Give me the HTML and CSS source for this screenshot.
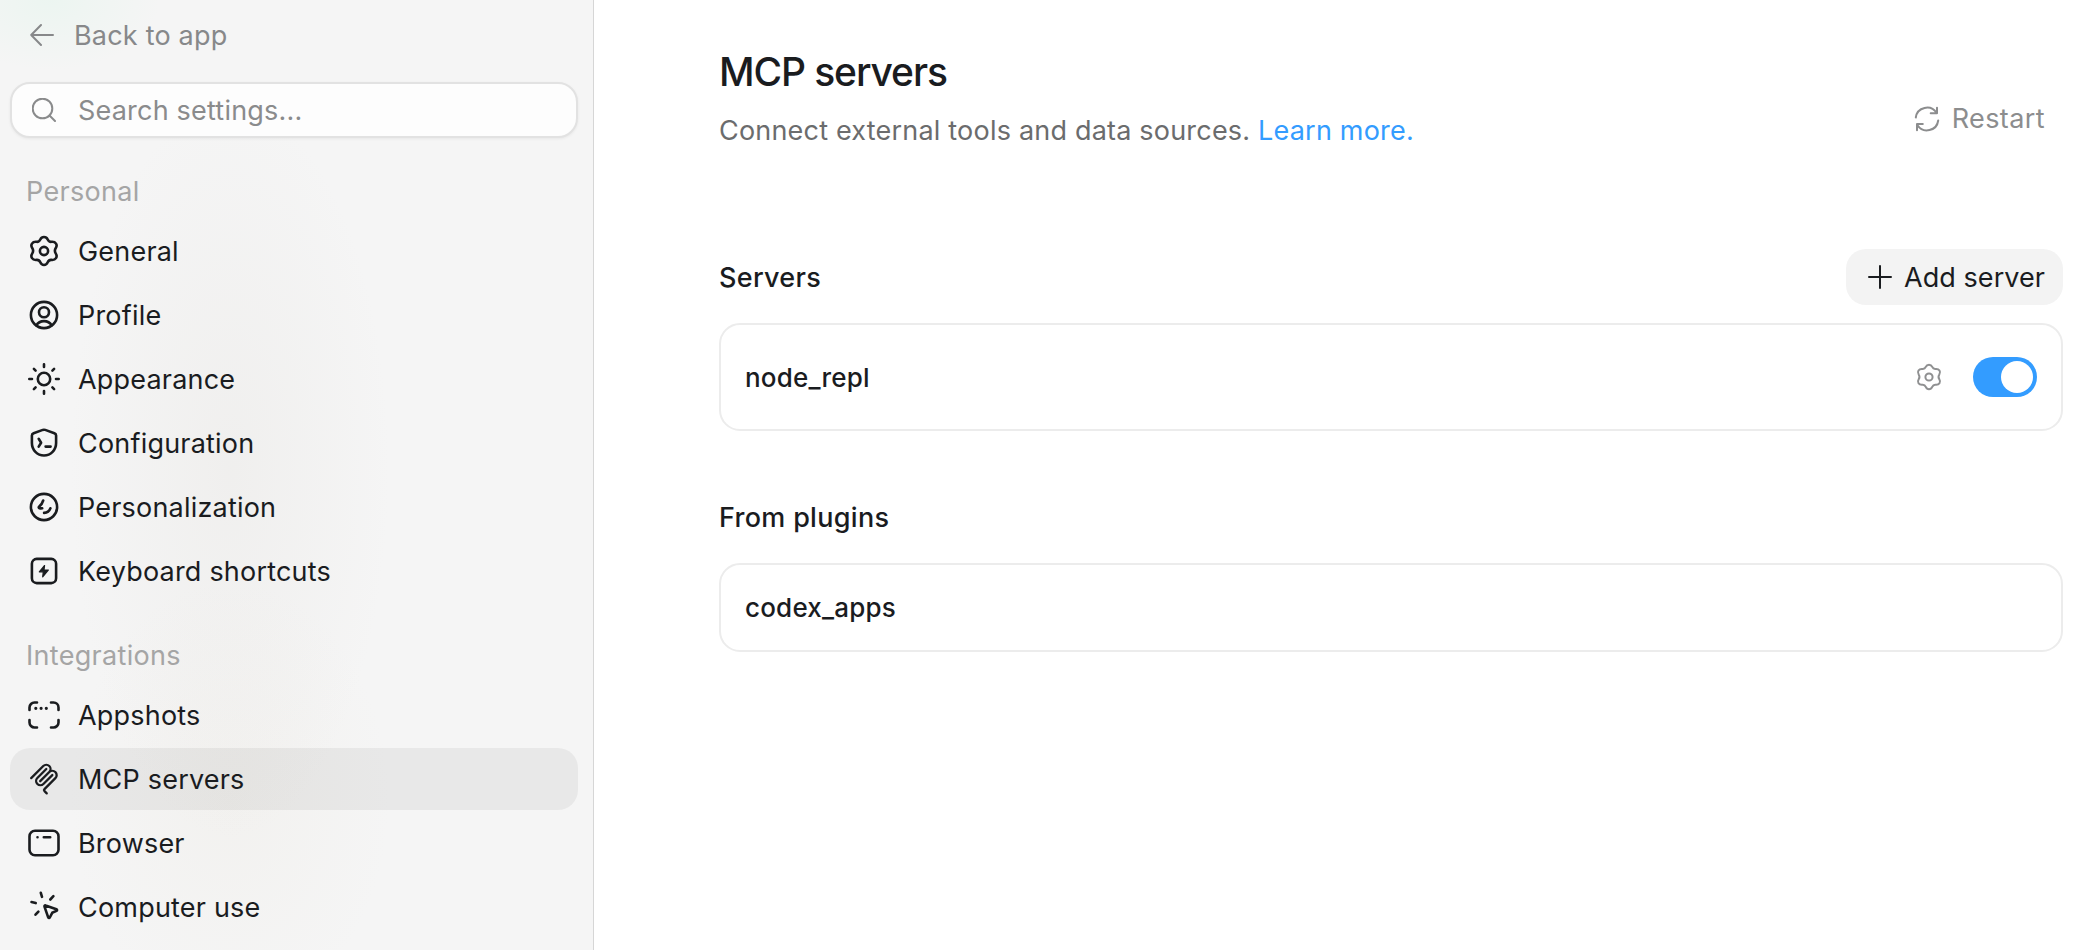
FILE: index.html
```html
<!DOCTYPE html>
<html lang="en">
<head>
    <meta charset="UTF-8">
    <meta name="viewport" content="width=device-width, initial-scale=1.0">
    <title>MCP servers</title>
    <link rel="stylesheet" href="styles.css">
</head>
<body>
    <aside class="sidebar">
        <a class="back">
            <svg class="back-icon" width="24" height="24" viewBox="0 0 24 24"><path d="M11 2 1.2 12 11 22M1.200 12H23"/></svg>
            <span>Back to app</span>
        </a>
        <label class="search">
            <svg width="24" height="24" viewBox="0 0 24 24"><circle cx="10.5" cy="10.5" r="9.8"/><path d="m17.500 17.500 5.500 5.500"/></svg>
            <span>Search settings...</span>
        </label>

        <h2 class="group-title">Personal</h2>
        <nav class="group">
            <a class="item">
                <svg class="icon" viewBox="0 0 32 32"><use href="#gear"/></svg>
                <span>General</span>
            </a>
            <a class="item">
                <svg class="icon" viewBox="0 0 32 32"><circle cx="16" cy="16" r="13.1"/><circle cx="16" cy="13.2" r="5"/><path d="M8.3 26.3c1.6-2.700 4.500-4.200 7.700-4.200s6.100 1.500 7.700 4.200"/></svg>
                <span>Profile</span>
            </a>
            <a class="item">
                <svg class="icon" viewBox="0 0 32 32"><circle cx="16" cy="16" r="6.200"/><path d="M16 1.300v2.700M16 28v2.700M1.300 16H4M28 16h2.700M5.900 5.900l1.700 1.700M24.400 24.400l1.700 1.700M5.900 26.100l1.700-1.700M24.400 7.600l1.700-1.700"/></svg>
                <span>Appearance</span>
            </a>
            <a class="item">
                <svg class="icon" viewBox="0 0 32 32"><path d="M14.800 2.900 5.600 6.200a2.600 2.600 0 0 0-1.700 2.400v7.400c0 7 5.300 12.500 12.100 12.500S28.100 23 28.100 16V8.600a2.600 2.600 0 0 0-1.700-2.400l-9.200-3.300a3.600 3.600 0 0 0-2.400 0z"/><path d="M10.700 11.800l2.400 3.900-2.400 3.900M17.600 19.600h5"/></svg>
                <span>Configuration</span>
            </a>
            <a class="item">
                <svg class="icon" viewBox="0 0 32 32"><circle cx="16" cy="16" r="13.100"/><path d="M15.200 9.500c-.8 2.600-2.100 4.700-4.200 6.300-.5.400-.2 1.300.4 1.400.9.200 1.900.2 2.800.1M22.400 17.300c-1 2.700-3.400 4.400-6.300 4.600"/></svg>
                <span>Personalization</span>
            </a>
            <a class="item">
                <svg class="icon" viewBox="0 0 32 32"><rect x="3.900" y="3.900" width="24.200" height="24.200" rx="4.800"/><path class="solid" d="m16.600 10.500-5.300 6.300h4l-.6 5 5.600-6.800h-4.300z"/></svg>
                <span>Keyboard shortcuts</span>
            </a>
        </nav>

        <h2 class="group-title">Integrations</h2>
        <nav class="group">
            <a class="item">
                <svg class="icon" viewBox="0 0 32 32"><path d="M1.500 11V8.500a5 5 0 0 1 5-5H9M23 3.500h2.500a5 5 0 0 1 5 5V11M30.500 21v2.500a5 5 0 0 1-5 5H23M9 28.500H6.500a5 5 0 0 1-5-5V21"/><path class="dots" d="M7.800 9.300h.01M13.100 9.300h.01M18.300 9.300h.01"/></svg>
                <span>Appshots</span>
            </a>
            <a class="item active">
                <svg class="icon mcp" viewBox="0 0 180 180"><path d="M18 84.850 85.880 16.970a24 24 0 0 1 33.940 33.940L68.560 102.180M69.270 101.470l50.550-50.560a24 24 0 0 1 33.940 0l.36.350a24 24 0 0 1 0 33.950l-61.400 61.390a8 8 0 0 0 0 11.310l12.610 12.610M102.850 33.940 52.650 84.150a24 24 0 0 0 33.940 33.940l50.200-50.210"/></svg>
                <span>MCP servers</span>
            </a>
            <a class="item">
                <svg class="icon" viewBox="0 0 32 32"><rect x="1.500" y="3.700" width="29" height="24.600" rx="5.500"/><path d="M9.500 10.200h.01M15.800 10.200h6.400"/></svg>
                <span>Browser</span>
            </a>
            <a class="item">
                <svg class="icon" viewBox="0 0 32 32"><path d="M16.500 15.600c-.3-.9.300-1.400 1.100-1.100l10.800 3.700c.9.300.9 1.300.1 1.700l-4.300 1.900-2.400 4.700c-.4.800-1.400.7-1.600-.2z"/><path d="m12.800 1.800 1.200 4M25.400 5.200l-3.100 3.300M3.500 11l4.200 1.100M10.400 20.600l-2.900 3.100"/></svg>
                <span>Computer use</span>
            </a>
        </nav>
    </aside>

    <main class="content">
        <header class="page-head">
            <div class="intro">
                <h1>MCP servers</h1>
                <p>Connect external tools and data sources. <a class="link">Learn more.</a></p>
            </div>
            <button class="restart">
                <svg width="26" height="26" viewBox="0 0 26 26"><path d="M1.800 11.500A11.300 11.300 0 0 1 22.500 6.800M23 1.800v5.500h-6.300M24.200 14.500A11.300 11.300 0 0 1 3.500 19.200M3 24.200v-6.300h5.800"/></svg>
                <span>Restart</span>
            </button>
        </header>

        <section class="servers">
            <div class="section-head">
                <h3>Servers</h3>
                <button class="add">
                    <svg width="24" height="24" viewBox="0 0 24 24"><path d="M12 1v22M1 12h22"/></svg>
                    <span>Add server</span>
                </button>
            </div>
            <div class="card card-server">
                <span class="name">node_repl</span>
                <svg class="card-gear" viewBox="0 0 32 32"><use href="#gear"/></svg>
                <span class="toggle"><span class="knob"></span></span>
            </div>
        </section>

        <section class="plugins">
            <div class="section-head">
                <h3>From plugins</h3>
            </div>
            <div class="card card-plugin">
                <span class="name">codex_apps</span>
            </div>
        </section>
    </main>

    <!-- shared icons -->
    <svg class="defs" width="0" height="0">
        <symbol id="gear" viewBox="0 0 32 32">
            <path d="M12.300 4.500C13.100 2.700 14.300 2 16 2s2.900.7 3.700 2.500c.8 1.800 1.800 2.500 3.800 2.300 2.300-.2 3.600.4 4.500 1.800s.9 2.800-.2 4.500c-1.300 1.900-1.300 3.500 0 5.500 1.100 1.700 1.100 3.100.2 4.500s-2.200 2-4.500 1.800c-2-.2-3 .6-3.800 2.400-.8 1.900-2 2.700-3.700 2.700s-2.900-.8-3.700-2.700c-.8-1.800-1.800-2.600-3.800-2.400-2.300.2-3.600-.4-4.500-1.800s-.9-2.800.2-4.500c1.300-2 1.300-3.600 0-5.500-1.100-1.700-1.100-3.100-.2-4.500s2.200-2 4.500-1.800c2 .2 3-.5 3.800-2.300z"/>
            <circle cx="16" cy="16" r="4.100"/>
        </symbol>
    </svg>
</body>
</html>
```
FILE: styles.css
```css
* {
    box-sizing: border-box;
}
body {
    margin: 0;
    display: flex;
    height: 950px;
    overflow: hidden;
    font-family: Inter, "Liberation Sans", sans-serif;
    font-size: 27px;
    letter-spacing: 0.2px;
    color: #1a1c1f;
    background: #fff;
}
h1, h2, h3, p {
    margin: 0;
    font-weight: 400;
}
svg {
    fill: none;
    stroke: currentColor;
    stroke-width: 2;
    stroke-linecap: round;
    stroke-linejoin: round;
    flex: none;
}
.defs {
    position: absolute;
}
button {
    font: inherit;
    letter-spacing: inherit;
    border: none;
    background: none;
    padding: 0;
    display: flex;
    align-items: center;
}

/* sidebar */
.sidebar {
    width: 594px;
    flex: none;
    padding: 6px 15px 0 10px;
    border-right: 1px solid #d6d6d6;
    background:
        radial-gradient(ellipse 110px 70px at 50px 0, rgba(225, 245, 235, 0.45), transparent),
        radial-gradient(ellipse 160px 370px at 230px 470px, rgba(210, 205, 197, 0.15), transparent),
        radial-gradient(ellipse 160px 220px at 230px 800px, rgba(228, 222, 208, 0.16), transparent),
        #f5f5f5;
}
.back {
    display: flex;
    align-items: center;
    height: 58px;
    padding-left: 20px;
    gap: 20px;
    color: #87888a;
}
.search {
    display: flex;
    align-items: center;
    height: 56px;
    margin-top: 18px;
    padding-left: 20px;
    gap: 22px;
    border: 2px solid #e2e2e2;
    border-radius: 20px;
    background: #fdfdfd;
    box-shadow: 0 1px 3px rgba(0, 0, 0, 0.06);
    color: #8a8b8c;
}
.group-title {
    height: 56px;
    padding: 0 16px;
    margin-top: 26px;
    line-height: 56px;
    font-size: 27px;
    letter-spacing: 0.3px;
    color: #a5a5a5;
}
.group {
    display: flex;
    flex-direction: column;
    gap: 2px;
}
.item {
    display: flex;
    align-items: center;
    height: 62px;
    padding-left: 18px;
    gap: 18px;
    border-radius: 20px;
}
.item.active {
    background: rgba(0, 0, 0, 0.05);
}
.icon {
    width: 32px;
    height: 32px;
    stroke-width: 2.6;
}
.icon .solid {
    fill: currentColor;
    stroke-width: 1.2;
}
.icon .dots {
    stroke-width: 3.2;
}
.icon.mcp {
    stroke-width: 13;
}

/* main area */
.content {
    flex: 1;
    padding: 0 17px 0 125px;
}
.page-head {
    display: flex;
    justify-content: space-between;
    align-items: center;
    height: 237px;
}
.intro {
    margin-bottom: 42px;
}
h1 {
    font-size: 39px;
    font-weight: 500;
    letter-spacing: -1.1px;
    line-height: 56px;
}
.page-head p {
    margin-top: 11px;
    line-height: 40px;
    color: #6b6c6d;
}
.link {
    color: #339cff;
}
.restart {
    gap: 12px;
    padding-right: 18px;
    letter-spacing: 0.4px;
    color: #8c8d8e;
}
.section-head {
    display: flex;
    justify-content: space-between;
    align-items: center;
    height: 80px;
    margin-bottom: 6px;
}
h3 {
    font-size: 27px;
    font-weight: 500;
    letter-spacing: 0.3px;
}
.add {
    height: 56px;
    padding: 0 18px 0 22px;
    gap: 12px;
    border-radius: 20px;
    background: #f3f3f3;
    letter-spacing: 0.05px;
    color: #1a1c1f;
}
.card {
    display: flex;
    align-items: center;
    padding: 0 24px;
    border: 2px solid #ececec;
    border-radius: 21px;
}
.card-server {
    height: 108px;
}
.card-plugin {
    height: 89px;
}
.name {
    flex: 1;
    font-size: 26px;
    font-weight: 500;
}
.card-gear {
    width: 28px;
    height: 28px;
    margin-right: 30px;
    stroke-width: 2.3;
    color: #8f9091;
}
.toggle {
    display: flex;
    justify-content: flex-end;
    width: 64px;
    height: 40px;
    padding: 4px;
    border-radius: 20px;
    background: #339cff;
}
.knob {
    width: 32px;
    height: 32px;
    border-radius: 50%;
    background: #fff;
}
.plugins {
    margin-top: 46px;
}
```
